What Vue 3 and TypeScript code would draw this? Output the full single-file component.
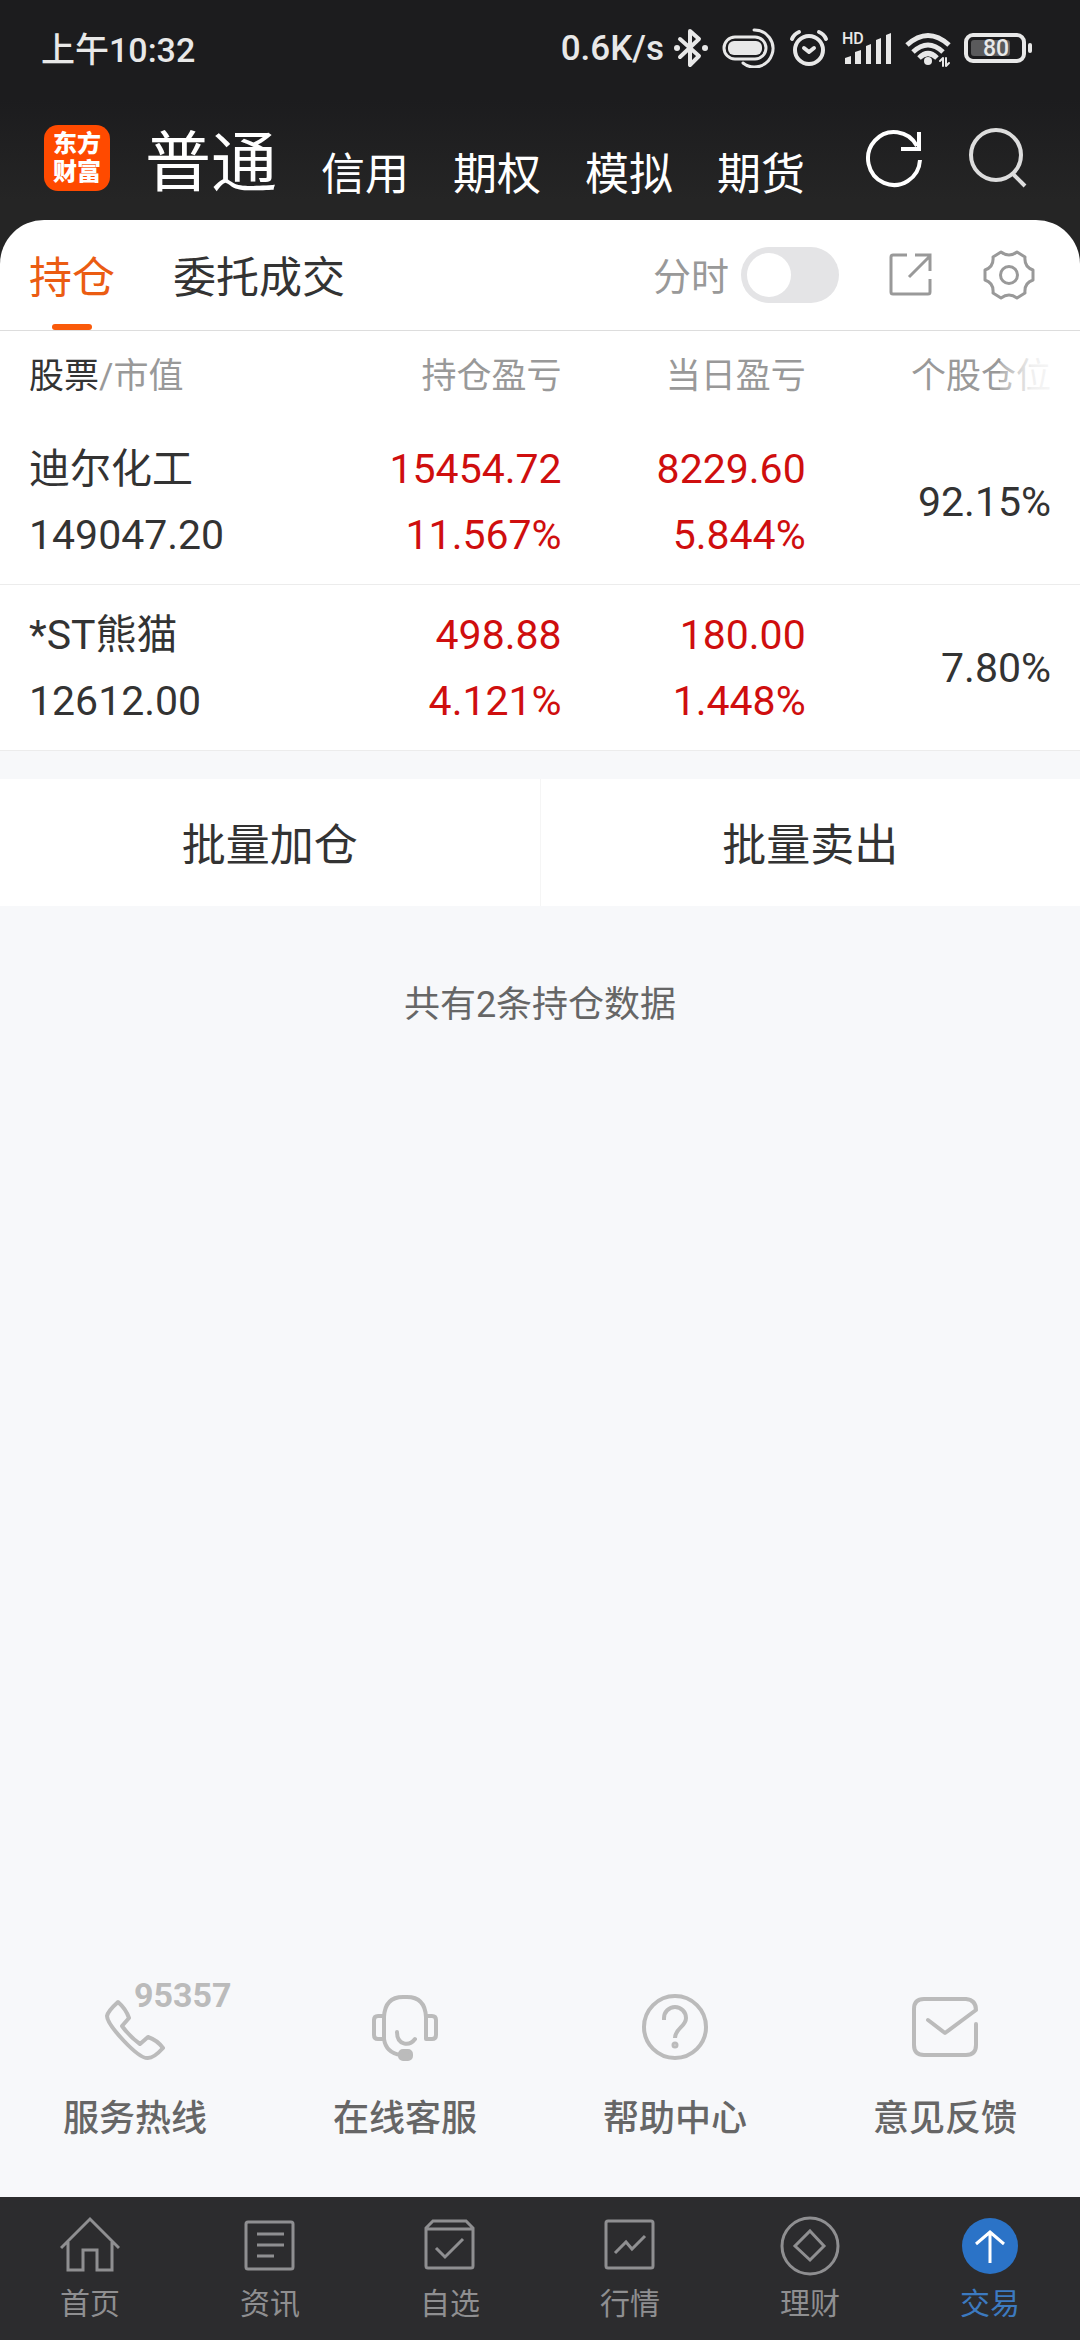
<script setup lang="ts">
import { ref } from 'vue'

interface Holding {
  name: string
  value: string
  profit: string
  profitRate: string
  today: string
  todayRate: string
  share: string
}

interface NavItem {
  label: string
  path: string
}

const accounts: string[] = ['普通', '信用', '期权', '模拟', '期货']
const activeAccount = ref('普通')

const views: string[] = ['持仓', '委托成交']
const activeView = ref('持仓')
const intraday = ref(false)

const holdings: Holding[] = [
  {
    name: '迪尔化工',
    value: '149047.20',
    profit: '15454.72',
    profitRate: '11.567%',
    today: '8229.60',
    todayRate: '5.844%',
    share: '92.15%',
  },
  {
    name: '*ST熊猫',
    value: '12612.00',
    profit: '498.88',
    profitRate: '4.121%',
    today: '180.00',
    todayRate: '1.448%',
    share: '7.80%',
  },
]

const navItems: NavItem[] = [
  { label: '首页', path: 'M1 32 30 3 59 32M8 26V54H23V34H37V54H52V26' },
  {
    label: '资讯',
    path: 'M8 6H51Q53 6 53 8V51Q53 53 51 53H8Q6 53 6 51V8Q6 6 8 6ZM17 18H44M17 29H44M17 40H34',
  },
  {
    label: '自选',
    path: 'M6 12 13 5H46L53 12V50Q53 52 51 52H8Q6 52 6 50ZM6 13H53M16 32 25 41 43 23',
  },
  {
    label: '行情',
    path: 'M8 5H51Q53 5 53 7V50Q53 52 51 52H8Q6 52 6 50V7Q6 5 8 5ZM15 37 26 26 32 33 45 20',
  },
  {
    label: '理财',
    path: 'M2 30A28 28 0 1 1 58 30A28 28 0 1 1 2 30ZM30 15 44 30 30 44 15 30Z',
  },
]
</script>

<template>
  <div class="page">
    <header class="top">
      <div class="status">
        <span class="clock">上午10:32</span>
        <div class="status-icons">
          <span class="speed">0.6K/s</span>
          <svg width="36" height="40" viewBox="0 0 36 40">
            <path class="ln" stroke-width="4" d="M7 11 26 28 17 37V3L26 11 7 29" />
            <circle class="fl" cx="4" cy="20" r="3" />
            <circle class="fl" cx="32" cy="20" r="3" />
          </svg>
          <svg width="54" height="40" viewBox="0 0 54 40">
            <rect class="ln" stroke-width="3" x="2" y="9" width="42" height="22" rx="11" />
            <rect class="fl" x="6" y="13" width="34" height="14" rx="6" />
            <path class="ln" stroke-width="3" d="M32 2A18.500 18.500 0 1 1 21 35" />
          </svg>
          <svg width="40" height="40" viewBox="0 0 40 40">
            <circle class="ln" stroke-width="4" cx="20" cy="22" r="14" />
            <path class="ln" stroke-width="4" d="M3 11Q5 6 10 4M37 11Q35 6 30 4M15 20 20 24 25 20" />
          </svg>
          <svg width="50" height="40" viewBox="0 0 50 40">
            <text class="tx" x="0" y="16" font-size="16">HD</text>
            <path
              class="fl"
              d="M3 30 9 28V36H3ZM13 24 19 22V36H13ZM24 18 29 16V36H24ZM34 12 39 10V36H34ZM44 7 49 5V36H44Z"
            />
          </svg>
          <svg width="46" height="40" viewBox="0 0 46 40">
            <path
              class="ln arcs"
              stroke-width="5"
              d="M2 17Q23 -2 44 17M8 24Q23 10 38 24M14 30Q23 21 32 30"
            />
            <circle class="fl" cx="23" cy="33" r="4" />
            <path class="ln" stroke-width="2" d="M38 38V30L35 33M41 30V38L44 35" />
          </svg>
          <svg width="68" height="40" viewBox="0 0 68 40">
            <rect class="ln" stroke-width="4" x="2" y="7" width="58" height="26" rx="7" />
            <rect fill="#5a5a5c" x="7" y="12" width="39" height="16" rx="3" />
            <rect class="fl" x="64" y="15" width="4" height="10" rx="2" />
            <text class="tx" x="19" y="28" font-size="23">80</text>
          </svg>
        </div>
      </div>

      <div class="bar">
        <div class="logo"><span>东方</span><span>财富</span></div>
        <nav class="accounts">
          <button
            v-for="item in accounts"
            :key="item"
            type="button"
            class="account"
            :class="{ active: item === activeAccount }"
            @click="activeAccount = item"
          >
            {{ item }}
          </button>
        </nav>
        <div class="bar-actions">
          <button type="button" aria-label="刷新">
            <svg width="60" height="60" viewBox="0 0 60 60" fill="none" stroke="#fff" stroke-width="4">
              <path d="M56 32A26 26.500 0 1 1 53 18M55 4V21H37" />
            </svg>
          </button>
          <button type="button" aria-label="搜索">
            <svg width="60" height="60" viewBox="0 0 60 60" fill="none" stroke="#ddd" stroke-width="4">
              <circle cx="28" cy="27" r="25" />
              <path d="M44 45 57 58" />
            </svg>
          </button>
        </div>
      </div>
    </header>

    <main class="content">
      <section class="card">
        <div class="views">
          <button
            v-for="item in views"
            :key="item"
            type="button"
            class="view"
            :class="{ active: item === activeView }"
            @click="activeView = item"
          >
            {{ item }}
          </button>
          <div class="tools">
            <label class="switch">
              <span>分时</span>
              <input v-model="intraday" type="checkbox" />
            </label>
            <button type="button" aria-label="分享">
              <svg width="48" height="48" viewBox="0 0 48 48" fill="none" stroke="#999" stroke-width="3">
                <path d="M20 4H6Q4 4 4 6V41Q4 43 6 43H41Q43 43 43 41V28M22 26 43 5M28 4H43V20" />
              </svg>
            </button>
            <button type="button" aria-label="设置">
              <svg
                width="52"
                height="52"
                viewBox="0 0 52 52"
                fill="none"
                stroke="#999"
                stroke-width="3"
                stroke-linejoin="round"
              >
                <path
                  d="M34 3L42 8Q41 18 50 21V31Q41 34 42 44L34 49Q26 43 18 49L10 44Q11 34 2 31V21Q11 18 10 8L18 3Q26 9 34 3Z"
                />
                <circle cx="26" cy="26" r="8.500" />
              </svg>
            </button>
          </div>
        </div>

        <table class="holdings">
          <colgroup>
            <col />
            <col class="c-num" />
            <col class="c-num" />
            <col class="c-share" />
          </colgroup>
          <thead>
            <tr>
              <th scope="col"><b>股票</b>/市值</th>
              <th scope="col">持仓盈亏</th>
              <th scope="col">当日盈亏</th>
              <th class="fade" scope="col">个股仓位</th>
            </tr>
          </thead>
          <tbody>
            <tr v-for="row in holdings" :key="row.name">
              <td>
                <div>{{ row.name }}</div>
                <div>{{ row.value }}</div>
              </td>
              <td class="up">
                <div>{{ row.profit }}</div>
                <div>{{ row.profitRate }}</div>
              </td>
              <td class="up">
                <div>{{ row.today }}</div>
                <div>{{ row.todayRate }}</div>
              </td>
              <td>{{ row.share }}</td>
            </tr>
          </tbody>
        </table>
      </section>

      <div class="batch">
        <button type="button">批量加仓</button>
        <button type="button">批量卖出</button>
      </div>

      <p class="total">共有{{ holdings.length }}条持仓数据</p>

      <div class="services">
        <a href="#hotline" class="service">
          <span class="service-icon">
            <svg width="72" height="72" viewBox="0 0 72 72">
              <path
                d="M19 11Q27 18 30 27L23 35Q31 46 41 53L49 46Q58 49 64 57Q55 67 49 67Q42 68 25 50Q8 32 8 25Q9 20 19 11Z"
              />
            </svg>
            <span class="hotline">95357</span>
          </span>
          服务热线
        </a>
        <a href="#chat" class="service">
          <span class="service-icon">
            <svg width="72" height="72" viewBox="0 0 72 72">
              <path
                d="M15 48V26Q16 6 34 6H38Q56 6 57 26V48H63Q67 48 67 44V29Q67 25 63 25H57M15 25H9Q5 25 5 29V44Q5 48 9 48H15Q17 62 32 64M28 41C28 54 40 56 46 48"
              />
              <rect x="31" y="60" width="11" height="8" rx="3" fill="#bbb" />
            </svg>
          </span>
          在线客服
        </a>
        <a href="#help" class="service">
          <span class="service-icon">
            <svg width="72" height="72" viewBox="0 0 72 72">
              <circle cx="36" cy="36" r="31" />
              <path class="arcs" d="M25 29V27A11 11 0 0 1 47 27C47 36 36 37 36 47" />
              <circle cx="36" cy="54" r="1.500" />
            </svg>
          </span>
          帮助中心
        </a>
        <a href="#feedback" class="service">
          <span class="service-icon">
            <svg width="72" height="72" viewBox="0 0 72 72">
              <path
                d="M67 33V54Q67 64 57 64H15Q5 64 5 54V18Q5 8 15 8H57Q67 9 67 19L36 42 19 29"
              />
            </svg>
          </span>
          意见反馈
        </a>
      </div>
    </main>

    <nav class="tabbar">
      <a v-for="item in navItems" :key="item.label" href="#" class="tab">
        <svg width="60" height="60" viewBox="0 0 60 60" fill="none" stroke="#8f8f91" stroke-width="3">
          <path :d="item.path" />
        </svg>
        {{ item.label }}
      </a>
      <a href="#" class="tab active" aria-current="page">
        <svg width="60" height="60" viewBox="0 0 60 60" fill="none" stroke="#fff" stroke-width="3">
          <circle cx="30" cy="30" r="28" fill="#2b73c7" stroke="none" />
          <path d="M30 15V47M16 28 30 16 44 28" />
        </svg>
        交易
      </a>
    </nav>
  </div>
</template>

<style>
body {
  background: #f7f8fa;
}
</style>

<style scoped>
.page {
  display: flex;
  flex-direction: column;
  min-height: 100vh;
  background: #f7f8fa;
  color: #333;
  font-family: Roboto, 'Noto Sans CJK SC', sans-serif;
}

button {
  box-sizing: border-box;
  margin: 0;
  padding: 0;
  border: 0;
  background: none;
  color: inherit;
  font: inherit;
  cursor: pointer;
}

a {
  color: inherit;
  text-decoration: none;
}

svg {
  display: block;
}

.top {
  padding-bottom: 48px;
  margin-bottom: -48px;
  background: linear-gradient(#1c1c1e 0, #1c1c1e 100px, #252525 200px);
  color: #fff;
}

.status {
  display: flex;
  justify-content: space-between;
  align-items: center;
  height: 96px;
  padding: 0 48px 0 41px;
  color: #e8e8e8;
  font-size: 34px;
  font-weight: 500;
}

.clock {
  padding-bottom: 2px;
}

.status-icons {
  display: flex;
  align-items: center;
  gap: 13px;
}

.speed {
  margin-right: -4px;
  font-size: 35px;
}

.ln {
  fill: none;
  stroke: #e8e8e8;
  stroke-linecap: round;
  stroke-linejoin: round;
}

.arcs {
  stroke-linecap: butt;
}

.fl,
.tx {
  fill: #e8e8e8;
}

.tx {
  font-weight: 500;
}

.bar {
  display: flex;
  align-items: center;
  height: 124px;
  padding: 0 52px 0 44px;
}

.logo {
  display: flex;
  flex-direction: column;
  align-items: center;
  justify-content: center;
  width: 66px;
  height: 66px;
  border-radius: 14px;
  background: #ff4a00;
  font-size: 24px;
  font-weight: 900;
  line-height: 28px;
}

.accounts {
  display: flex;
  align-items: flex-end;
  gap: 44px;
  padding: 12px 0 0 35px;
}

.account {
  font-size: 44px;
  line-height: 44px;
}

.account.active {
  font-size: 66px;
  line-height: 66px;
}

.bar-actions {
  display: flex;
  gap: 44px;
  margin-left: auto;
}

.content {
  display: flex;
  flex: 1;
  flex-direction: column;
}

.card {
  border-radius: 44px 44px 0 0;
  background: #fff;
}

.views {
  display: flex;
  align-items: center;
  gap: 58px;
  height: 110px;
  padding: 0 45px 0 29px;
  border-bottom: 1px solid #ddd;
}

.view {
  position: relative;
  height: 110px;
  padding-bottom: 3px;
  font-size: 43px;
}

.view.active {
  color: #eb5c12;
}

.view.active::after {
  content: '';
  position: absolute;
  bottom: 0;
  left: 50%;
  width: 40px;
  height: 6px;
  margin-left: -20px;
  border-radius: 3px;
  background: #fa5a0a;
}

.tools {
  display: flex;
  align-items: center;
  gap: 48px;
  margin-left: auto;
}

.switch {
  display: flex;
  align-items: center;
  gap: 12px;
  color: #999;
  font-size: 38px;
}

.switch span {
  padding-bottom: 3px;
}

.switch input {
  appearance: none;
  box-sizing: border-box;
  width: 98px;
  height: 56px;
  margin: 0;
  padding: 6px;
  border-radius: 28px;
  background: #e4e4e6;
}

.switch input::before {
  content: '';
  display: block;
  width: 44px;
  height: 44px;
  border-radius: 50%;
  background: #fff;
}

.switch input:checked {
  background: #fa5a0a;
}

.switch input:checked::before {
  margin-left: auto;
}

.holdings {
  width: 100%;
  border-collapse: collapse;
  table-layout: fixed;
}

.holdings th {
  box-sizing: border-box;
  height: 88px;
  padding: 0 0 5px;
  color: #999;
  font-size: 35px;
  font-weight: 400;
  text-align: right;
}

.holdings th b {
  color: #333;
  font-weight: 400;
}

.c-num {
  width: 22.6%;
}

.c-share {
  width: 25.4%;
}

.fade {
  position: relative;
}

.fade::after {
  content: '';
  position: absolute;
  top: 0;
  right: 0;
  bottom: 0;
  width: 80px;
  background: linear-gradient(90deg, rgba(255, 255, 255, 0.2), rgba(255, 255, 255, 0.85) 40%, #fff);
}

.holdings td {
  padding: 17px 0 16px;
  border-bottom: 1px solid #ececec;
  font-size: 41px;
  line-height: 66px;
  text-align: right;
}

.holdings th:first-child,
.holdings td:first-child {
  padding-left: 29px;
  text-align: left;
}

.holdings th:last-child,
.holdings td:last-child {
  padding-right: 29px;
}

.holdings .up {
  color: #cf0e0e;
}

.batch {
  display: flex;
  margin-top: 28px;
  background: #fff;
}

.batch button {
  flex: 1;
  height: 127px;
  padding-bottom: 2px;
  font-size: 44px;
}

.batch button + button {
  border-left: 1px solid #f5f5f5;
}

.total {
  margin: 73px 0 0;
  color: #666;
  font-size: 36px;
  line-height: 52px;
  text-align: center;
}

.services {
  display: flex;
  margin-top: auto;
  padding-bottom: 52px;
}

.service {
  display: flex;
  flex: 1;
  flex-direction: column;
  align-items: center;
  gap: 30px;
  color: #666;
  font-size: 36px;
  font-weight: 500;
  line-height: 52px;
}

.service-icon {
  position: relative;
}

.service-icon svg {
  fill: none;
  stroke: #bbb;
  stroke-width: 4;
  stroke-linecap: round;
  stroke-linejoin: round;
}

.service-icon .arcs {
  stroke-linecap: butt;
}

.hotline {
  position: absolute;
  top: -16px;
  left: 35px;
  color: #bbb;
  font-size: 34px;
  font-weight: 700;
  line-height: 40px;
}

.tabbar {
  display: flex;
  height: 143px;
  background: #2c2c2e;
}

.tab {
  display: flex;
  flex: 1;
  flex-direction: column;
  align-items: center;
  gap: 8px;
  padding-top: 19px;
  color: #8f8f91;
  font-size: 30px;
  line-height: 40px;
}

.tab.active {
  color: #3c7ac0;
}
</style>
